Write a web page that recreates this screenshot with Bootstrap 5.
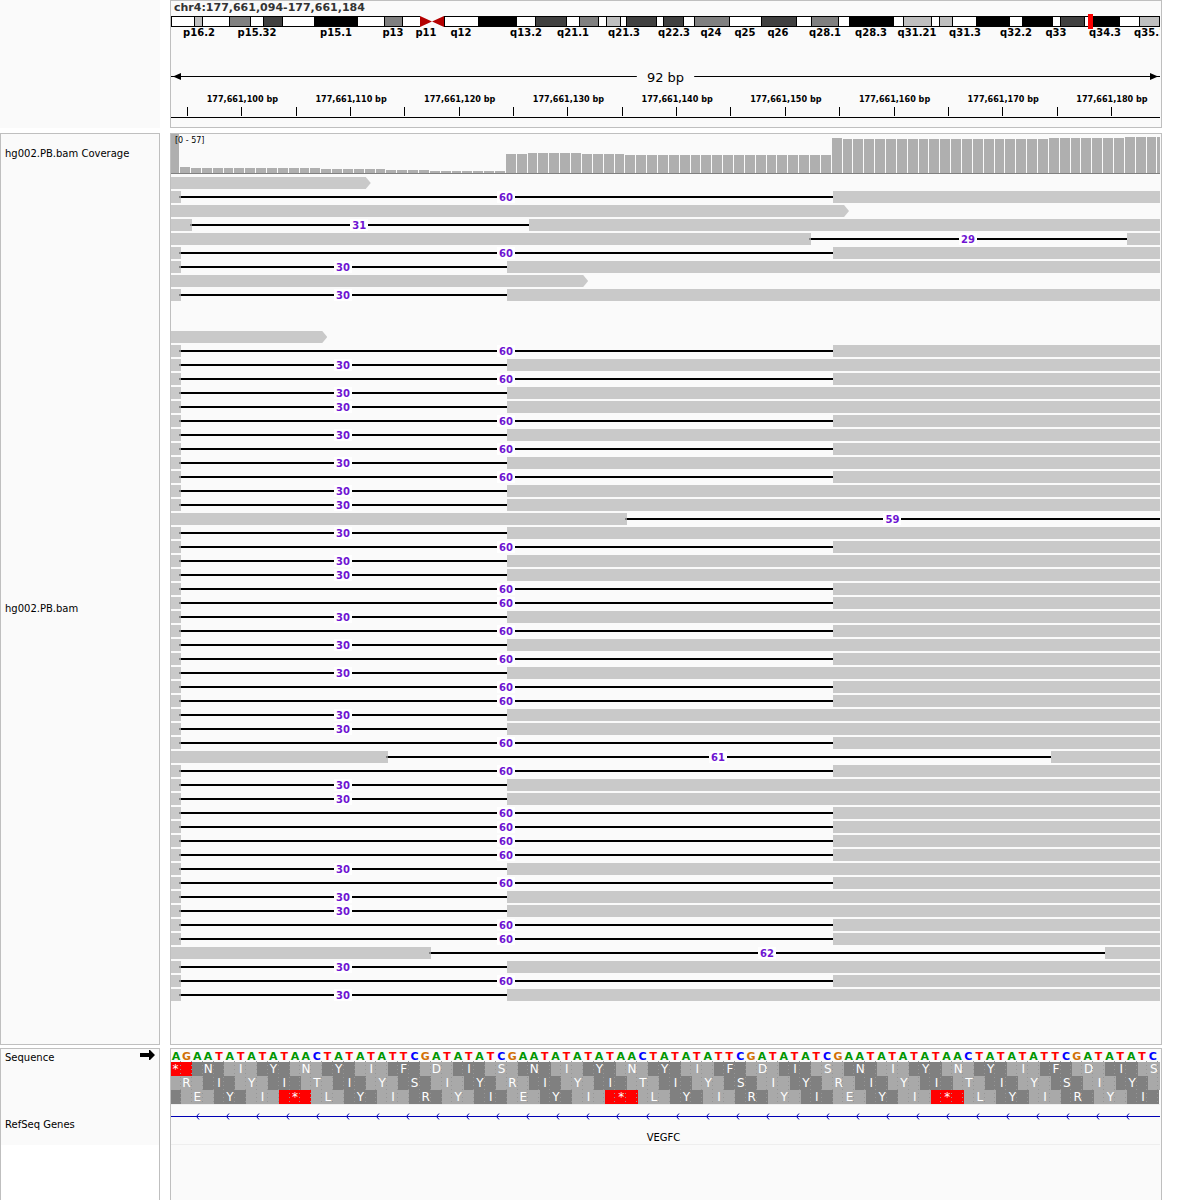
<!DOCTYPE html>
<html lang="en">
<head>
<meta charset="utf-8">
<meta name="viewport" content="width=device-width, initial-scale=1">
<title>chr4:177,661,094-177,661,184</title>
<link href="https://cdn.jsdelivr.net/npm/bootstrap@5.3.0/dist/css/bootstrap.min.css" rel="stylesheet">
<style>
  body { font-family: "DejaVu Sans", sans-serif; font-size: 10px; line-height: 12px; color: #000; background: #fff; padding-right: 18px; }
  .band-row { column-gap: 10px; }
  .side { flex: 0 0 160px; background: #fafafa; }
  .main { flex: 1 1 0; min-width: 0; background: #fafafa; padding-right: 1px; }
  .framed { border: 1px solid #bfbfbf; }
  .data-row { margin: 5px 0 3px; }
  .side-label { padding-left: 4px; }
  .loc { font-size: 11px; line-height: 13px; height: 15px; padding-left: 3px; color: #333; font-weight: 700; }
  .ideo { height: 25px; overflow: visible; clip-path: inset(-2px 0 0 0); }
  .ideo text { font-size: 10px; font-weight: 700; }
  .ruler { height: 86px; overflow: hidden; }
  .ruler text { font-size: 9px; font-weight: 700; font-family: "DejaVu Sans Condensed", "DejaVu Sans", sans-serif; }
  .ruler .extent { font-size: 13px; font-weight: 400; font-family: "DejaVu Sans", sans-serif; }
  .cov-h { height: 40px; }
  .coverage { border-bottom: 1px solid #808080; }
  .cov-range { left: 4px; top: 1px; font-size: 8px; line-height: 12px; }
  .cov-bar { flex: none; border-right: 1px solid #fafafa; }
  .cov-bar i { display: block; background: #afafaf; }
  .pile { padding: 3px 0 41px; }
  .aln { height: 12px; margin-bottom: 2px; }
  .seg { flex: none; background: #c9c9c9; }
  .seg.fwd { clip-path: polygon(0 0, calc(100% - 5px) 0, 100% 50%, calc(100% - 5px) 100%, 0 100%); }
  .del { flex: none; position: relative; display: flex; justify-content: center; padding-right: 2px; }
  .del::before { content: ""; position: absolute; left: -2px; right: 0; top: 5px; height: 2px; background: #000; border-left: 2px solid #808080; }
  .del b { position: relative; width: 18px; height: 12px; background: #fff; color: #6e14d2; text-align: center; line-height: 13px; }
  .fill-rest { flex: 1 1 0; min-width: 0; }
  .open-end { border-bottom: 0; }
  .seq-h { height: 55px; }
  .strand-icon { width: 15px; height: 14px; }
  .bases { height: 13px; line-height: 15px; font-size: 11px; font-weight: 700; }
  .bases span { flex: none; display: flex; justify-content: center; }
  .nA { color: #009600; } .nC { color: #0000ff; } .nG { color: #d17105; } .nT { color: #ff0000; }
  .aminos { height: 14px; font-size: 12px; line-height: 14px; color: #fff; }
  .aminos span { flex: none; text-align: center; }
  .aaL { background: #a9a9a9; } .aaD { background: #808080; } .aaS { background: #ff0000; }
  .dots { left: 0; right: 0; top: 12px; bottom: 0; }
  .dots span { flex: none; background: repeating-linear-gradient(#969696 0 1px, transparent 1px 4px) right / 1px 100% no-repeat; }
  .gene-h { height: 41px; }
  .gene { border-top: 1px solid #eee; border-bottom: 1px solid #eee; }
  .blank { background: #fff; }
</style>
<script src="https://cdn.jsdelivr.net/npm/bootstrap@5.3.0/dist/js/bootstrap.bundle.min.js"></script>
</head>
<body class="d-flex flex-column min-vh-100">

<header class="band-row d-flex">
  <div class="side"></div>
  <div class="main framed">
    <div class="loc">chr4:177,661,094-177,661,184</div>
    <svg class="ideo d-block w-100" id="ideo" role="img" aria-label="Chromosome 4 ideogram"></svg>
    <svg class="ruler d-block w-100" id="ruler" role="img" aria-label="Ruler"></svg>
  </div>
</header>

<main class="band-row data-row d-flex">
  <div class="side framed d-flex flex-column">
    <div class="side-label cov-h d-flex align-items-center">hg002.PB.bam Coverage</div>
    <div class="side-label flex-fill d-flex align-items-center">hg002.PB.bam</div>
  </div>
  <div class="main framed">
    <div class="coverage cov-h position-relative d-flex align-items-end overflow-hidden" id="coverage">
      <span class="cov-range position-absolute">[0 - 57]</span>
    </div>
    <div class="pile overflow-hidden" id="pile"></div>
  </div>
</main>

<section class="band-row d-flex flex-fill">
  <div class="side framed open-end d-flex flex-column">
    <div class="side-label seq-h d-flex align-items-start justify-content-between pe-1">
      <span class="pt-1 lh-1">Sequence</span>
      <svg class="strand-icon" viewBox="0 0 15 14" aria-hidden="true"><path d="M0 4H9V1H10L15 6L10 11H9V8H0Z"/></svg>
    </div>
    <div class="side-label gene-h d-flex align-items-center">RefSeq Genes</div>
    <div class="blank flex-fill"></div>
  </div>
  <div class="main framed open-end">
    <div class="seq-h position-relative overflow-hidden" id="seq"></div>
    <div class="gene gene-h">
      <svg class="d-block w-100" height="39" role="img" aria-label="VEGFC gene">
        <defs><pattern id="strand" x="24" y="0" width="30" height="39" patternUnits="userSpaceOnUse">
          <path d="M4 8.5L1.500 11.5L4 14.500" fill="none" stroke="#0000b4"/></pattern></defs>
        <rect width="97.500%" height="20" fill="url(#strand)"/>
        <rect y="11" width="100%" height="1" fill="#0000b4"/>
        <text x="49.8%" y="36" text-anchor="middle">VEGFC</text>
      </svg>
    </div>
  </div>
</section>

<script>
  const BASE = 1.0991;      // width of one base, percent of the view
  const LEAD = 0.083;       // part of the first base left of the view
  const pct = n => (n * BASE).toFixed(3) + '%';
  const at = px => (px / 9.89).toFixed(3) + '%';
  const byId = id => document.getElementById(id);

  // Ideogram: [end, stain]
  const bands = [[23,'w'],[31,'l'],[58,'w'],[79,'g'],[92,'w'],[111,'d'],[143,'w'],[186,'k'],[213,'w'],[231,'g'],[249,'w'],[273,'c'],[307,'w'],[345,'k'],[364,'w'],[395,'d'],[408,'w'],[427,'g'],[435,'w'],[449,'l'],[455,'w'],[485,'d'],[492,'w'],[512,'d'],[523,'w'],[558,'g'],[590,'w'],[625,'d'],[640,'w'],[667,'g'],[678,'w'],[722,'k'],[732,'w'],[760,'l'],[768,'w'],[781,'l'],[805,'w'],[838,'k'],[851,'w'],[881,'k'],[889,'w'],[913,'d'],[918,'w'],[948,'k'],[968,'w'],[989,'l']];
  const stain = { w:'#fff', l:'#bfbfbf', g:'#808080', d:'#404040', k:'#000' };
  let s = '', from = 0;
  for (const [to, c] of bands) {
    if (c === 'c') {
      s += `<svg x="${at(from)}" y="0" width="${at(to - from)}" height="11" viewBox="0 0 24 11" preserveAspectRatio="none"><path d="M0 0L12 5.500L0 11ZM24 0L12 5.500L24 11Z" fill="#b40000"/></svg>`;
    } else {
      s += `<rect x="${at(from)}" y="0" width="${at(to - from)}" height="11" fill="#000" shape-rendering="crispEdges"/>`;
      if (c !== 'k') s += `<svg x="${at(from)}" y="1" width="${at(to - from)}" height="9"><rect x="1" width="100%" height="9" fill="${stain[c]}" shape-rendering="crispEdges"/></svg>`;
    }
    from = to;
  }
  s += '<rect x="99.900%" width="1" height="11"/>';
  s += `<svg x="${at(917)}" y="-2" width="5" height="15"><rect width="5" height="15" fill="#f00"/></svg>`;
  const names = [['p16.2',28],['p15.32',86],['p15.1',165],['p13',222],['p11',255],['q12',290],['q13.2',355],['q21.1',402],['q21.3',453],['q22.3',503],['q24',540],['q25',574],['q26',607],['q28.1',654],['q28.3',700],['q31.21',746],['q31.3',794],['q32.2',845],['q33',885],['q34.3',934],['q35.1',979]];
  for (const [t, x] of names) s += `<text x="${at(x)}" y="20" text-anchor="middle">${t}</text>`;
  byId('ideo').innerHTML = s;

  // Ruler
  s = '<rect y="35" width="47.100%" height="1"/><rect x="52.900%" y="35" width="47.100%" height="1"/>' +
      '<path d="M2 35.500L10 32V39Z"/><svg x="100%" overflow="visible"><path d="M-2 35.500L-10 32V39Z"/></svg>' +
      '<text class="extent" x="50%" y="41" text-anchor="middle">92 bp</text><rect y="76" width="100%" height="1"/>';
  for (let i = 0; i < 18; i++) {
    const x = 16 + i * 54.35;
    s += `<rect x="${at(x)}" y="66" width="1" height="9" shape-rendering="crispEdges"/>`;
    if (i % 2) s += `<text x="${at(x + 1)}" y="61" text-anchor="middle">177,661,${100 + (i - 1) * 5} bp</text>`;
  }
  byId('ruler').innerHTML = s;

  // Coverage: [bases, bar height]
  const runs = [[1,39],[1,6],[12,5],[6,4],[4,3],[7,2],[2,19],[5,20],[4,19],[19,18],[1,35],[19,34],[7,35],[4,36]];
  s = ''; let first = true;
  for (const [n, h] of runs) for (let i = 0; i < n; i++) {
    s += `<div class="cov-bar" style="width:${pct(first ? 0.84 : 1)}"><i style="height:${h}px"></i></div>`;
    first = false;
  }
  byId('coverage').insertAdjacentHTML('afterbegin', s);

  // Alignments: '>n' read ending after n bases, 'a-b' deletion, 6 and 3 the two common deletions
  const reads = ('>18 6 >62 2-33 59-88 6 3 >38 3 . . >14 6 3 6 3 3 6 3 6 3 6 3 3 42-101 3 6 3 3 6 6 3 6 3 6 3 6 6 3 3 6 20-81 ' +
    '6 3 3 6 6 6 6 3 6 3 3 6 6 24-86 3 6 3').split(' ');
  byId('pile').innerHTML = reads.map(r => {
    if (r === '.') return '<div class="aln"></div>';
    if (r[0] === '>') return `<div class="aln d-flex"><div class="seg fwd" style="width:calc(${pct(r.slice(1) - LEAD)} + 5px)"></div></div>`;
    const [a, b] = (r === '6' ? '1-61' : r === '3' ? '1-31' : r).split('-').map(Number);
    const end = Math.min(b, 91 + LEAD);
    return `<div class="aln d-flex"><div class="seg" style="width:${pct(a - LEAD)}"></div>` +
      `<div class="del" style="width:${pct(end - a)}"><b>${b - a}</b></div>` + (b < 91 ? '<div class="seg fill-rest"></div>' : '') + '</div>';
  }).join('');

  // Sequence and three-frame translation; '-' is a codon whose letter lies outside the view
  const seq = 'A' + 'GAATATATATAACTATATATTCGATATATC'.repeat(3);
  s = '<div class="bases d-flex">' + [...seq].map((c, i) => `<span class="n${c}" style="width:${pct(i ? 1 : 1 - LEAD)}">${c}</span>`).join('') + '</div>';
  const frames = [[-1, '*' + 'NIYNYIFDIS'.repeat(3), 1], [0, 'RIYITIYSIY'.repeat(3) + '-', 1], [-2, '-' + 'EYI*LYIRYI'.repeat(3), 0]];
  for (const [start, aa, odd] of frames) {
    // a frame shifted left is wider than the view, so its codon share shrinks accordingly
    const codon = 3 * BASE / (100 - (start - LEAD) * BASE) * 100;
    s += `<div class="aminos d-flex" style="margin-left:${pct(start - LEAD)}">` + [...aa].map((c, i) =>
      `<span class="${c === '*' ? 'aaS' : i % 2 === odd ? 'aaD' : 'aaL'}" style="width:${codon.toFixed(4)}%">${c === '-' ? '' : c}</span>`).join('') + '</div>';
  }
  s += '<div class="dots position-absolute d-flex overflow-hidden">' + [...seq].map((c, i) => `<span style="width:${pct(i ? 1 : 1 - LEAD)}"></span>`).join('') + '</div>';
  byId('seq').innerHTML = s;
</script>
</body>
</html>
